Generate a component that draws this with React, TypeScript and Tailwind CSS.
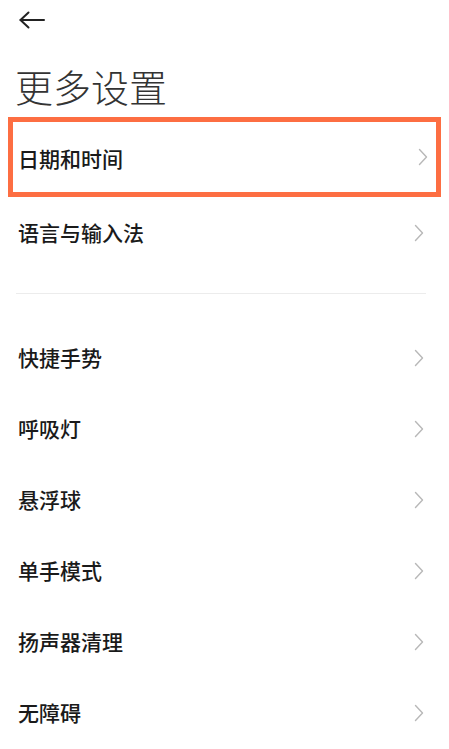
import React from 'react';

const GROUP_ONE = ['语言与输入法'];
const GROUP_TWO = ['快捷手势', '呼吸灯', '悬浮球', '单手模式', '扬声器清理', '无障碍'];

const Chevron: React.FC = () => (
  <svg width="10" height="18" viewBox="0 0 10 18" fill="none">
    <polyline points="1.5,1.5 8.5,9 1.5,16.5" stroke="#b8b8b8" strokeWidth="1.4" strokeLinecap="round" strokeLinejoin="round" />
  </svg>
);

const Row: React.FC<{ label: string }> = ({ label }) => (
  <div className="h-[71px] flex items-center justify-between pl-[18px] pr-[25px]">
    <span className="text-[21px] font-medium text-[#1a1a1a]">{label}</span>
    <Chevron />
  </div>
);

const App: React.FC = () => {
  return (
    <div
      className="min-h-screen bg-white"
      style={{ fontFamily: '"Noto Sans CJK SC", "Noto Sans", sans-serif' }}
    >
      {/* Header */}
      <div className="h-[40px] flex items-center pl-[19px]">
        <svg width="26" height="18" viewBox="0 0 26 18" fill="none">
          <line x1="1.5" y1="9" x2="25" y2="9" stroke="#222" strokeWidth="2" strokeLinecap="round" />
          <polyline points="9.5,1.5 1.5,9 9.5,16.5" stroke="#222" strokeWidth="2" strokeLinecap="round" strokeLinejoin="round" />
        </svg>
      </div>
      <div className="h-[77px] pt-[21px] pl-[15px]">
        <h1 className="text-[38px] leading-[50px] font-light text-[#333]">更多设置</h1>
      </div>

      {/* Highlighted row */}
      <div className="mx-[8px] border-[5px] border-[#fd6e42] h-[80px] flex items-center justify-between pl-[5px] pr-[8px]">
        <span className="text-[21px] font-medium text-[#1a1a1a] pt-[4px]">日期和时间</span>
        <Chevron />
      </div>

      {GROUP_ONE.map(label => (
        <Row key={label} label={label} />
      ))}

      <div className="mt-[25px] ml-[16px] mr-[23px] h-px bg-[#ececec]"></div>

      <div className="mt-[28px]">
        {GROUP_TWO.map(label => (
          <Row key={label} label={label} />
        ))}
      </div>
    </div>
  );
};

export default App;
